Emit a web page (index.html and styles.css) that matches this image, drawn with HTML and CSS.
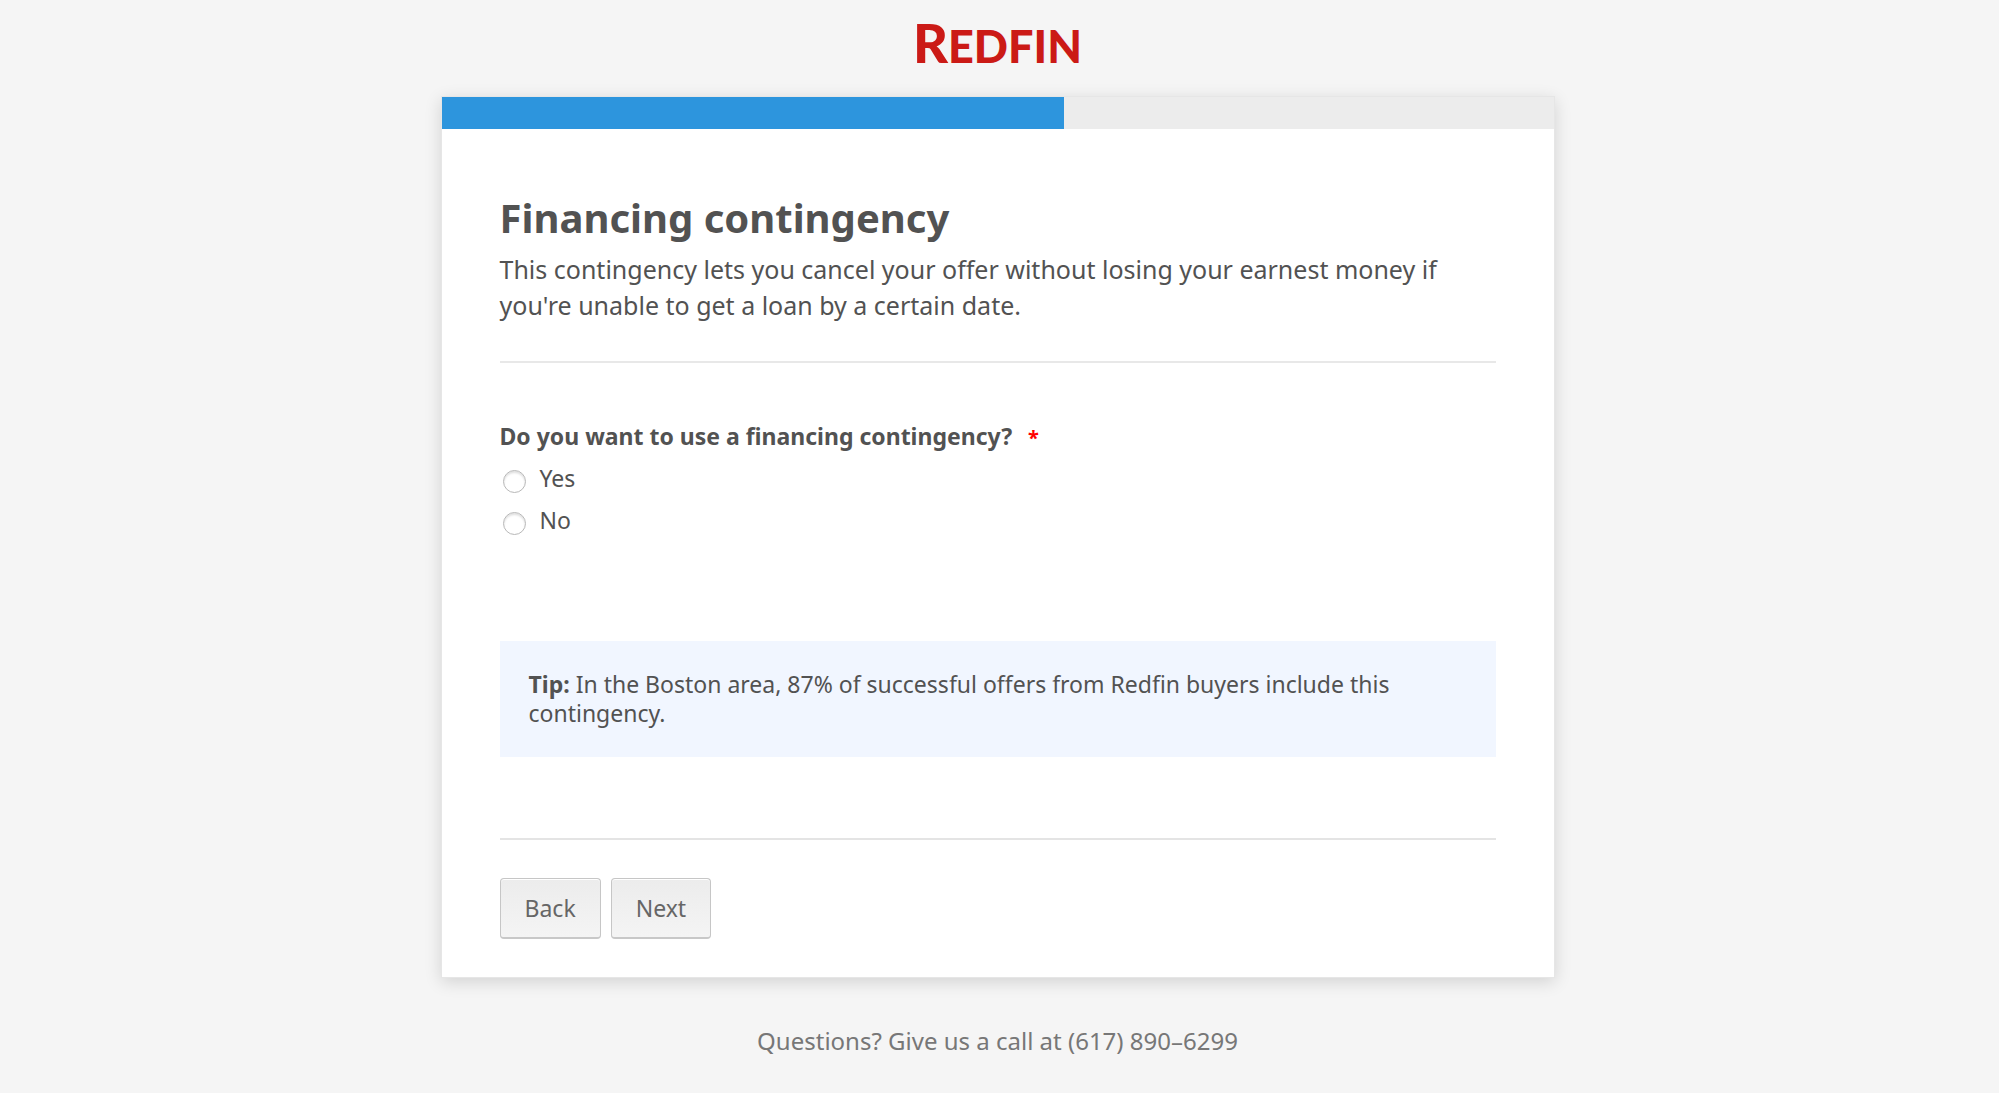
FILE: index.html
```html
<!DOCTYPE html>
<html lang="en">
<head>
  <meta charset="UTF-8" />
  <meta name="viewport" content="width=device-width, initial-scale=1.0" />
  <title>Financing contingency - Redfin</title>
  <link rel="stylesheet" href="styles.css">
</head>
<body>
  <header class="logo"><span class="logo-initial">R</span>EDFIN</header>

  <main class="card">
    <div class="progress">
      <div class="progress-bar" style="width: 56%"></div>
    </div>

    <form class="form">
      <div class="intro">
        <h1>Financing contingency</h1>
        <p>This contingency lets you cancel your offer without losing your earnest money if you're unable to get a loan by a certain date.</p>
      </div>

      <fieldset class="question">
        <legend>Do you want to use a financing contingency? <span class="required">*</span></legend>
        <div class="option">
          <input type="radio" id="yes" name="financing" value="yes" />
          <label for="yes">Yes</label>
        </div>
        <div class="option">
          <input type="radio" id="no" name="financing" value="no" />
          <label for="no">No</label>
        </div>
      </fieldset>

      <p class="tip"><b>Tip:</b> In the Boston area, 87% of successful offers from Redfin buyers include this contingency.</p>

      <div class="buttons">
        <button type="button">Back</button>
        <button type="button">Next</button>
      </div>
    </form>
  </main>

  <footer>Questions? Give us a call at (617) 890–6299</footer>
</body>
</html>
```

FILE: styles.css
```css
* {
  box-sizing: border-box;
  margin: 0;
  padding: 0;
}

body {
  font-family: 'Lucida Grande', 'Noto Sans', sans-serif;
  font-size: 23px;
  line-height: 29px;
  color: #525252;
  background: #f5f5f5;
  padding: 0 24px 0 20px;
}

.logo {
  height: 96px;
  padding-top: 9px;
  text-align: center;
  font-family: 'Lato', sans-serif;
  font-size: 45px;
  font-weight: 900;
  line-height: 68px;
  color: #cb1a16;
}

.logo-initial {
  font-size: 54px;
}

.card {
  max-width: 1114px;
  margin: 0 auto;
  background: #fff;
  border: 1px solid #e6e6e6;
  box-shadow: 0 4px 16px rgba(0, 0, 0, 0.14);
}

.progress {
  height: 32px;
  background: #ececec;
}

.progress-bar {
  height: 100%;
  background: #2d95dd;
}

.form {
  padding: 64px 58px 38px;
}

.intro {
  padding-bottom: 38px;
  border-bottom: 2px solid #e8e8e8;
}

h1 {
  font-size: 40px;
  line-height: 50px;
  margin-bottom: 8px;
}

.intro p {
  font-size: 25px;
  line-height: 36px;
}

.question {
  border: none;
  padding-top: 59px;
  margin-bottom: 100px;
}

.question legend {
  float: left;
  width: 100%;
  font-weight: bold;
  line-height: 29px;
  margin-bottom: 5px;
}

.required {
  margin-left: 10px;
  font-size: 20px;
  color: #f00;
}

.option {
  clear: both;
  display: flex;
  align-items: center;
  gap: 14px;
  height: 42px;
  padding-left: 3px;
}

.option input {
  appearance: none;
  width: 23px;
  height: 23px;
  margin-top: 6px;
  border: 1px solid #b8b8b8;
  border-radius: 50%;
  background: #fff;
  box-shadow: inset 0 2px 2px rgba(0, 0, 0, 0.12);
}

.option input:checked {
  border: 7px solid #2d95dd;
}

.tip {
  padding: 29px;
  margin-bottom: 81px;
  background: #f1f6ff;
}

.buttons {
  display: flex;
  gap: 10px;
  padding-top: 38px;
  border-top: 2px solid #e4e4e4;
}

button {
  height: 61px;
  padding: 0 24px;
  font-family: inherit;
  font-size: 23px;
  color: #666;
  background: linear-gradient(#ececec, #f4f4f4);
  border: 1px solid #c6c6c6;
  border-bottom: 2px solid #c8c8c8;
  border-radius: 4px;
  box-shadow: inset 0 1px 0 #fff;
  cursor: pointer;
}

button:hover {
  background: #eaeaea;
}

footer {
  padding: 48px 0 36px;
  text-align: center;
  font-size: 24px;
  color: #777;
}
```
